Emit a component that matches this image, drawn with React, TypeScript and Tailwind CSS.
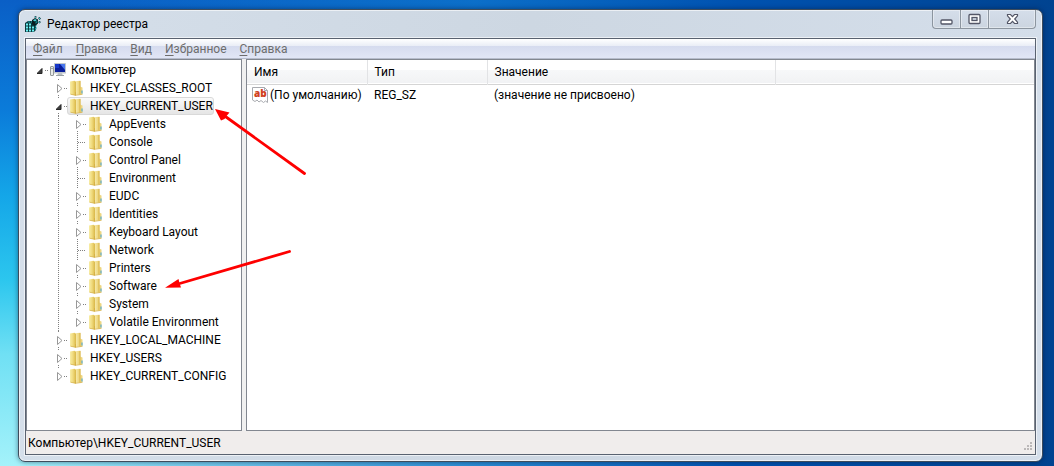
import type { ReactNode } from "react";

interface TreeNode {
  name: string;
  expandable?: boolean;
  selected?: boolean;
  children?: TreeNode[];
}

const menuItems = ["Файл", "Правка", "Вид", "Избранное", "Справка"];

const hives: TreeNode[] = [
  { name: "HKEY_CLASSES_ROOT", expandable: true },
  {
    name: "HKEY_CURRENT_USER",
    expandable: true,
    selected: true,
    children: [
      { name: "AppEvents", expandable: true },
      { name: "Console" },
      { name: "Control Panel", expandable: true },
      { name: "Environment" },
      { name: "EUDC", expandable: true },
      { name: "Identities", expandable: true },
      { name: "Keyboard Layout", expandable: true },
      { name: "Network" },
      { name: "Printers", expandable: true },
      { name: "Software", expandable: true },
      { name: "System", expandable: true },
      { name: "Volatile Environment", expandable: true },
    ],
  },
  { name: "HKEY_LOCAL_MACHINE", expandable: true },
  { name: "HKEY_USERS", expandable: true },
  { name: "HKEY_CURRENT_CONFIG", expandable: true },
];

const values = [{ name: "(По умолчанию)", type: "REG_SZ", data: "(значение не присвоено)" }];

function RegeditIcon() {
  return (
    <svg width="16" height="16" viewBox="0 0 16 16" aria-hidden="true">
      <path d="M0 7l3-2h8v9l-2 2H0z" fill="#0b3a3e" />
      <path d="M1 7.500h2v2H1zM4 7.500h2v2H4zM1 10.500h2v2H1zM4 10.500h2v2H4zM7 10.500h2v2H7zM1 13.500h2v2H1zM4 13.500h2v2H4zM7 13.500h2v2H7z" fill="#6df2f4" />
      <path d="M3 5.500h2v1H3zM6 5.500h2v1H6zM10 9l1.500-1v2L10 11zM10 12l1.500-1v2L10 14z" fill="#1aa5aa" />
      <path d="M7 4l3-2 3 1.500v4L10 10 7 8z" fill="#0a1d20" />
      <path d="M8 4.500L10 3l2 1-2 1.500z" fill="#48d3d8" />
      <path d="M10.500 6l2-1.500v2l-2 1.500z" fill="#128389" />
      <path d="M9 1l1.500-1L12 1l-1.500 1zM13 2l1.500-1L16 2.500 14.500 4zM13 6l1.500-1L16 6l-1.500 1.500z" fill="#0e4a50" />
      <path d="M10 1h1v.7h-1zM14 2h1v1h-1zM14 6h1v.7h-1z" fill="#39c9ce" />
    </svg>
  );
}

function ComputerIcon() {
  return (
    <svg width="16" height="16" viewBox="0 0 16 16" className="shrink-0" aria-hidden="true">
      <rect x=".5" y="4.500" width="3" height="9" rx=".5" fill="#e8eae8" stroke="#949a9a" />
      <path d="M1.500 6.500h1" stroke="#5f6868" />
      <path d="M8 11h4l1 3H7z" fill="#b9bfc2" />
      <path d="M6 13.500h8" stroke="#9aa2a5" />
      <rect x="4" y="1" width="12" height="10.500" rx=".6" fill="#c0c6cc" />
      <rect x="5" y="2" width="10" height="8" fill="#0a1f9c" />
      <path d="M10 2h5v6z" fill="#4a78ee" />
      <path d="M5 2h4v4H5z" fill="#1536c8" />
    </svg>
  );
}

function FolderIcon() {
  return (
    <svg width="16" height="16" viewBox="0 0 16 16" className="shrink-0" aria-hidden="true">
      <defs>
        <linearGradient id="flap" x1="0" x2="1">
          <stop offset="0" stopColor="#f8eda6" />
          <stop offset=".5" stopColor="#f0da7c" />
          <stop offset="1" stopColor="#d9b748" />
        </linearGradient>
        <linearGradient id="back" x1="0" x2="1">
          <stop offset="0" stopColor="#fdf6c8" />
          <stop offset="1" stopColor="#e8cc66" />
        </linearGradient>
      </defs>
      <path d="M5 1.200L11.500.8v13.700L5 15.200z" fill="url(#back)" />
      <path d="M1 1.500L5.500.8 7 2v13.500l-6-1.300z" fill="url(#flap)" />
      <path d="M11 6.500l2.500 1v6.700l-2.500.3z" fill="#eed680" />
      <path d="M11 1v13.500M6.500 12v3.500M1.500 14.200l5 1.100 7-1" stroke="#d2ac44" strokeWidth=".7" fill="none" />
      <path d="M13 10.500v3" stroke="#3aa0d8" />
    </svg>
  );
}

function StringValueIcon() {
  return (
    <svg width="16" height="16" viewBox="0 0 16 16" className="shrink-0" aria-hidden="true">
      <path d="M.5.500h12l3 3v12l-2-1.500-2 1.500-2.500-2-2 1.500-2-2-2 1.500-2.500-1.500z" fill="#fff" stroke="#a9abb0" />
      <path d="M12.500.500v3h3" fill="none" stroke="#a9abb0" />
      <text x="2" y="10" fontFamily="Open Sans, sans-serif" fontSize="10" fontWeight="800" fill="#d04020">ab</text>
    </svg>
  );
}

// Dotted connector plus the expand triangle in front of every key
function Branch({ node, last, root }: { node: TreeNode; last?: boolean; root?: boolean }) {
  const open = root || !!node.children;
  return (
    <svg width="11" height="18" viewBox="0 0 11 18" className="shrink-0" aria-hidden="true">
      <g stroke="#808080" strokeDasharray="1 1">
        {!root && <path d={node.expandable ? "M2.500 0v2" : "M2.500 0v9"} />}
        {!root && !last && <path d={node.expandable ? "M2.500 16v2" : "M2.500 10v8"} />}
        <path d={node.expandable ? "M8 9.500h3" : "M3 9.500h8"} />
      </g>
      {node.expandable && open && <path d="M5 7.500v5H0z" fill="#404040" stroke="#262626" />}
      {node.expandable && !open && <path d="M1.500 5.500v8l4.500-4z" fill="#fff" stroke="#989898" />}
    </svg>
  );
}

function TreeItem({ node, last }: { node: TreeNode; last: boolean }) {
  return (
    <li role="treeitem" aria-selected={!!node.selected} aria-expanded={node.expandable ? !!node.children : undefined}>
      <div className="flex h-[18px] items-center">
        <Branch node={node} last={last} />
        <button
          type="button"
          className={`flex h-[18px] items-center gap-[5px] rounded-[3px] border pl-px whitespace-nowrap ${
            node.selected ? "border-[#d9d9d9] bg-linear-to-b from-[#fafafa] to-[#e5e5e5]" : "border-transparent"
          }`}
        >
          <FolderIcon />
          {node.name}
        </button>
      </div>
      {node.children && (
        <ul role="group" className="ml-[2px] border-l border-dotted border-[#808080] pl-4">
          {node.children.map((child, i) => (
            <TreeItem key={child.name} node={child} last={i === node.children!.length - 1} />
          ))}
        </ul>
      )}
    </li>
  );
}

function CaptionButton({ label, className, children }: { label: string; className: string; children: ReactNode }) {
  return (
    <button
      type="button"
      aria-label={label}
      className={`flex h-[19px] items-center justify-center border-[#8c959f] bg-linear-to-b from-[#d5deea] to-[#ccd5e0] inset-ring inset-ring-white/40 ${className}`}
    >
      {children}
    </button>
  );
}

function TitleBar() {
  return (
    <header className="flex h-7 items-center gap-[6px]">
      <RegeditIcon />
      <h1 className="flex-1">Редактор реестра</h1>
      <div className="flex self-start">
        <CaptionButton label="Свернуть" className="w-7 rounded-bl-[4px] border-b border-l">
          <svg width="13" height="12" viewBox="0 0 13 12">
            <rect x="1" y="7" width="11" height="4" rx="1" fill="#fff" stroke="#535666" strokeWidth="1.300" />
          </svg>
        </CaptionButton>
        <CaptionButton label="Развернуть" className="w-7 border-b border-l">
          <svg width="13" height="12" viewBox="0 0 13 12">
            <rect x="1" y="1.500" width="11" height="9" rx="1" fill="#fff" stroke="#535666" strokeWidth="1.300" />
            <rect x="4" y="4.500" width="5" height="3" fill="#d3dbe6" stroke="#535666" strokeWidth="1.300" />
          </svg>
        </CaptionButton>
        <CaptionButton label="Закрыть" className="w-12 rounded-br-[4px] border-x border-b">
          <svg width="13" height="12" viewBox="0 0 13 12">
            <path
              d="M1.500 1.500h3l2 2.200 2-2.200h3v1.300L8.700 6l2.800 3.200v1.300h-3l-2-2.200-2 2.200h-3V9.200L4.300 6 1.500 2.800z"
              fill="#fff"
              stroke="#535666"
              strokeWidth="1.200"
            />
          </svg>
        </CaptionButton>
      </div>
    </header>
  );
}

function ValueTable() {
  return (
    <table className="w-full table-fixed border-collapse text-left">
      <colgroup>
        <col className="w-[120px]" />
        <col className="w-[120px]" />
        <col className="w-[288px]" />
        <col />
      </colgroup>
      <thead>
        <tr className="h-6 border-b border-[#d5d5d5] bg-linear-to-b from-white from-45% via-[#f7f8f9] via-45% to-[#f1f2f4]">
          <th className="border-r border-[#e2e3e5] p-0 pl-[7px] font-normal">Имя</th>
          <th className="border-r border-[#e2e3e5] p-0 pl-[7px] font-normal">Тип</th>
          <th className="border-r border-[#e2e3e5] p-0 pl-[7px] font-normal">Значение</th>
          <td />
        </tr>
      </thead>
      <tbody>
        {values.map((v) => (
          <tr key={v.name} className="h-[22px]">
            <td className="p-0 pl-[5px]">
              <span className="flex items-center gap-[2px] whitespace-nowrap">
                <StringValueIcon />
                {v.name}
              </span>
            </td>
            <td className="p-0 pl-[7px]">{v.type}</td>
            <td className="p-0 pl-[7px]">{v.data}</td>
            <td />
          </tr>
        ))}
      </tbody>
    </table>
  );
}

function Pointers() {
  return (
    <svg width="320" height="310" viewBox="0 0 320 310" className="pointer-events-none absolute top-0 left-0" aria-hidden="true">
      <g stroke="#fe0000" strokeWidth="2.800" strokeLinecap="round">
        <path d="M224 115.500L304.500 173.500" />
        <path d="M178 284L289.500 251.500" />
      </g>
      <path d="M215 109l14.500 3.500-3 3.500-2 3-3.500 1.500zM165 287.700l13.500-8.700 1 4 1.500 4.500z" fill="#fe0000" />
    </svg>
  );
}

export default function App() {
  return (
    <div className="relative flex min-h-screen bg-[linear-gradient(to_right,#0c73ca00_2%,#0c73cacc_45%,#0052b0_70%,#004390),linear-gradient(to_bottom,#0a5fc6,#0b7cda_24%,#14a6e8_42%,#2cc6ee_60%,#70e0f4_76%,#a4f2fa)] pt-[9px] pr-[11px] pb-1 pl-[18px] font-[Roboto,'Noto_Sans',sans-serif] text-xs text-black">
      <div className="flex flex-1 flex-col rounded-[7px] border border-[#3e4c5c] bg-linear-to-r from-[#d5dfea] via-[#cdd7e2] to-[#d4deea] px-[6px] pb-[6px] shadow-[0_0_5px_rgba(0,20,50,0.5)] inset-ring inset-ring-white/60">
        <TitleBar />
        <div className="flex flex-1 flex-col border border-[#596270] bg-[#f0f0f0] ring-1 ring-white/60">
          <nav className="flex h-5 items-center gap-[13px] border-b border-[#b6bccc] bg-[linear-gradient(to_bottom,#ffffff,#e9edf6_37%,#d5dbee_37%,#e1e6f6)] px-[7px] text-[#6d6d6d]">
            {menuItems.map((item) => (
              <button key={item} type="button">
                <span className="underline underline-offset-2">{item[0]}</span>
                {item.slice(1)}
              </button>
            ))}
          </nav>
          <main className="flex flex-1 gap-1">
            <section className="w-[216px] shrink-0 border border-[#828790] bg-white pt-px pl-[10px]">
              <ul role="tree">
                <li role="treeitem" aria-expanded="true" aria-selected="false">
                  <div className="flex h-[18px] items-center">
                    <Branch node={{ name: "Компьютер", expandable: true }} root />
                    <button type="button" className="flex h-[18px] items-center gap-[5px] border border-transparent px-px">
                      <ComputerIcon />
                      Компьютер
                    </button>
                  </div>
                  <ul role="group" className="pl-[19px]">
                    {hives.map((node, i) => (
                      <TreeItem key={node.name} node={node} last={i === hives.length - 1} />
                    ))}
                  </ul>
                </li>
              </ul>
            </section>
            <section className="min-w-0 flex-1 border border-[#828790] bg-white">
              <ValueTable />
            </section>
          </main>
          <footer className="flex h-[23px] items-center justify-between bg-[#f0edec] px-[2px]">
            <p>Компьютер\HKEY_CURRENT_USER</p>
            <svg width="10" height="10" viewBox="0 0 10 10" className="mb-[2px] self-end" aria-hidden="true">
              <path d="M7 0h2v2H7zM4 3h2v2H4zM7 3h2v2H7zM1 6h2v2H1zM4 6h2v2H4zM7 6h2v2H7z" fill="#bbb8b8" />
            </svg>
          </footer>
        </div>
      </div>
      <Pointers />
    </div>
  );
}
